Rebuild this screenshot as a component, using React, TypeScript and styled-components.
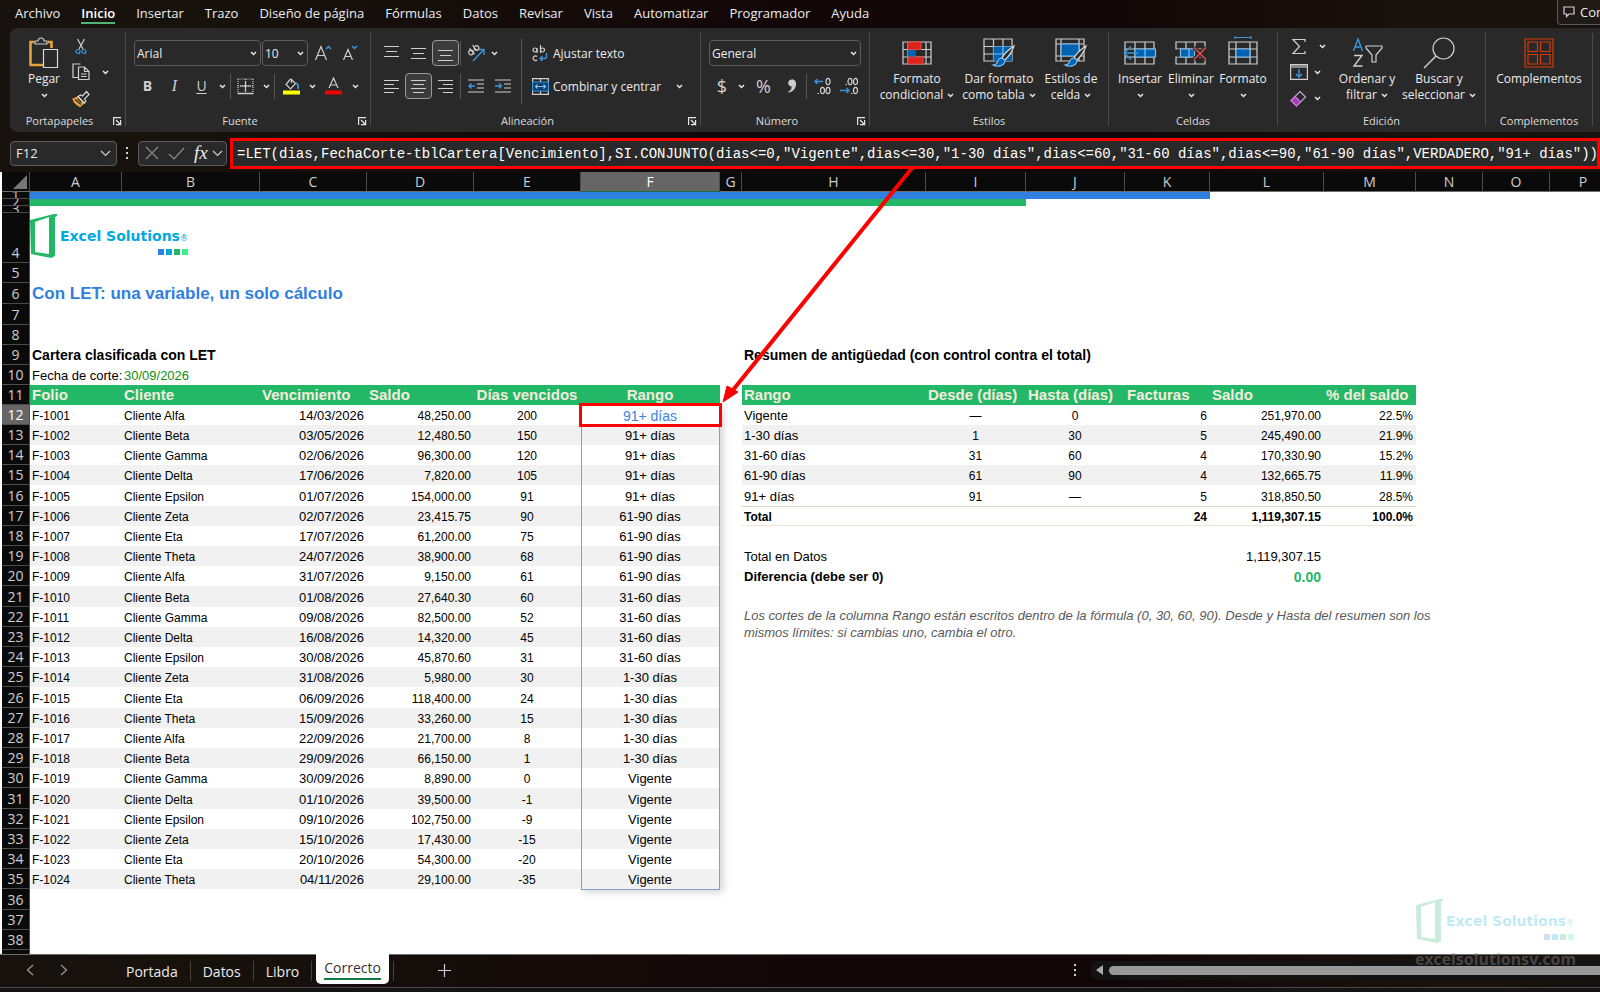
import React from "react";
import styled, { createGlobalStyle, css } from "styled-components";

const UI = `"Open Sans", "Noto Sans", sans-serif`;
const ARIAL = `"Liberation Sans", Arial, sans-serif`;
const INK = "#d0d0d0";
const BLUE = "#3a96dd";
const FILL = "#0063b1";
const LIGHT = "#83beec";

const GlobalStyle = createGlobalStyle`
  *, *::before, *::after { box-sizing: border-box; }
  body { margin: 0; background: #fff; }
  button, input, select { font: inherit; color: inherit; background: none; border: 0; padding: 0; margin: 0; outline: none; }
  svg { display: block; flex: none; }
`;

const Shell = styled.div`
  position: relative;
  display: flex;
  flex-direction: column;
  height: 100vh;
  overflow: hidden;
  font-family: ${UI};
  color: #ececec;
  background: linear-gradient(90deg, #17120d 0%, #17110c 15%, #120606 50%, #120706 70%, #1a120d 90%, #17120d 100%);
`;

/* ---------- Menu tabs ---------- */

const MenuBar = styled.nav`
  display: flex;
  flex: none;
  height: 28px;
  padding-left: 15px;
  gap: 21px;
  font-size: 13px;
  line-height: 26px;
  white-space: nowrap;
  overflow: hidden;
`;

const MenuTab = styled.a<{ $active?: boolean }>`
  height: 24px;
  color: #ececec;
  text-decoration: none;
  ${(p) => p.$active && css`
    font-weight: 600;
    color: #fff;
    border-bottom: 2px solid #4fb477;
  `}
`;

const CommentsButton = styled.button`
  display: flex;
  align-items: center;
  gap: 5px;
  flex: none;
  width: 43px;
  height: 25px;
  margin-left: auto;
  padding-left: 5px;
  overflow: hidden;
  border: 1px solid #5a5a5a;
  border-width: 0 0 1px 1px;
  border-radius: 0 0 0 4px;
  background: #201a17;
`;

/* ---------- Ribbon ---------- */

const Ribbon = styled.div`
  display: flex;
  flex: none;
  height: 104px;
  margin-left: 10px;
  background: #292929;
  border-radius: 8px 0 0 8px;
  overflow: hidden;
`;

const Group = styled.section<{ $w: number }>`
  position: relative;
  display: flex;
  flex-direction: column;
  flex: none;
  width: ${(p) => p.$w}px;
  padding-top: 5px;
`;

const GroupEdge = styled.div`
  flex: none;
  width: 1px;
  height: 93px;
  margin-top: 5px;
  background: #4a4a4a;
`;

const GroupBody = styled.div<{ $left?: number }>`
  display: flex;
  height: 78px;
  padding-left: ${(p) => p.$left ?? 0}px;
`;

const GroupFoot = styled.div`
  display: flex;
  align-items: center;
  height: 20px;
  font-size: 11px;
  line-height: 20px;
  color: #dcdcdc;
`;

const GroupLabel = styled.span`
  flex: 1;
  text-align: center;
`;

const Launcher = styled.button`
  width: 9px;
  height: 9px;
  margin: 0 3px 0 4px;
`;

const ToolRows = styled.div`
  display: flex;
  flex-direction: column;
  gap: 7px;
  padding-top: 7px;
`;

const ToolRow = styled.div`
  display: flex;
  align-items: center;
  height: 26px;
`;

const Tool = styled.button<{ $w?: number; $on?: boolean }>`
  display: flex;
  align-items: center;
  justify-content: center;
  flex: none;
  width: ${(p) => p.$w ?? 27}px;
  height: 26px;
  border-radius: 4px;
  ${(p) => p.$on && css`
    background: #3b3b3b;
    border: 1px solid #9a9a9a;
  `}
`;

const CopyMenu = styled(Tool)`
  margin-top: 26px;
`;

const ToolText = styled.button`
  display: flex;
  align-items: center;
  width: 164px;
  height: 26px;
  font-size: 12px;
  white-space: nowrap;
`;

const ToolIcon = styled.span`
  display: flex;
  justify-content: center;
  width: 26px;
`;

const ToolEnd = styled.span`
  margin-left: auto;
  padding-right: 8px;
`;

const Sep = styled.div<{ $tall?: boolean }>`
  flex: none;
  width: 1px;
  height: ${(p) => (p.$tall ? 65 : 25)}px;
  margin: ${(p) => (p.$tall ? "6px 5px 0 5px" : "0 1px")};
  background: #555;
`;

const Combo = styled.label<{ $w: number }>`
  display: flex;
  align-items: center;
  width: ${(p) => p.$w}px;
  height: 26px;
  margin-right: 1px;
  padding: 0 3px 0 2px;
  border: 1px solid #5c5c5c;
  border-radius: 4px;
  font-size: 12px;

  select { flex: 1; min-width: 0; appearance: none; }
  option { color: #000; }
`;

const BigButton = styled.button<{ $w: number }>`
  display: flex;
  flex-direction: column;
  align-items: center;
  flex: none;
  width: ${(p) => p.$w}px;
  height: 78px;
  font-size: 12px;
  line-height: 16px;
  white-space: nowrap;
`;

const BigIcon = styled.span`
  display: flex;
  align-items: center;
  justify-content: center;
  height: 38px;
  padding-top: 1px;
`;

const BigLine = styled.span`
  display: flex;
  align-items: center;
  gap: 4px;
  height: 16px;
`;

const ToolColumn = styled.div<{ $w: number }>`
  display: flex;
  flex-direction: column;
  flex: none;
  width: ${(p) => p.$w}px;
`;

/* ---------- Formula bar ---------- */

const FormulaBar = styled.div`
  display: flex;
  align-items: center;
  flex: none;
  height: 40px;
  padding-left: 10px;
  padding-top: 2px;
`;

const NameBox = styled.label`
  display: flex;
  align-items: center;
  flex: none;
  width: 107px;
  height: 25px;
  padding: 0 5px;
  border: 1px solid #5c5c5c;
  border-radius: 4px;
  background: #292929;
  font-size: 13px;

  input { flex: 1; min-width: 0; }
`;

const Grip = styled.div`
  display: flex;
  justify-content: center;
  flex: none;
  width: 21px;
`;

const FormulaActions = styled.div`
  display: flex;
  align-items: center;
  flex: none;
  width: 89px;
  height: 25px;
  padding-left: 6px;
  margin-right: 3px;
  gap: 9px;
  border: 1px solid #5c5c5c;
  border-radius: 4px;
  background: #292929;
`;

const FxButton = styled.button`
  display: flex;
  align-items: center;
  gap: 4px;
  font: italic 19px/20px "Liberation Serif", serif;
`;

const FormulaField = styled.label`
  flex: 1;
  min-width: 0;
  height: 31px;
  padding: 0 0 0 4px;
  border: 3px solid #fe0000;
  background: #292929;

  input {
    width: 100%;
    height: 24px;
    font: 14px/24px "Liberation Mono", monospace;
    color: #fff;
  }
`;

/* ---------- Sheet ---------- */

const SheetArea = styled.main`
  flex: 1;
  min-height: 0;
  overflow: hidden;
  padding-left: 2px;
  background: #fff;
  color: #000;
`;

const Grid = styled.table`
  table-layout: fixed;
  width: 100%;
  min-width: 1615px;
  border-collapse: separate;
  border-spacing: 0;
  font-family: ${ARIAL};
  font-size: 12px;
  line-height: 18px;
  white-space: nowrap;
`;

const ColHead = styled.th<{ $on?: boolean }>`
  height: 20px;
  padding: 0;
  font: 14px/18px ${UI};
  color: ${(p) => (p.$on ? "#fff" : "#cfcfcf")};
  background: ${(p) => (p.$on ? "#666" : "#0a0a0a")};
  border-right: 1px solid #4c4c4c;
  border-bottom: 1px solid ${(p) => (p.$on ? "#1e6b3c" : "#6e6e6e")};
`;

const Corner = styled(ColHead)`
  svg { margin-left: auto; margin-right: 2px; }
`;

const RowHead = styled.th<{ $on?: boolean }>`
  padding: 0;
  font: 14px/18px ${UI};
  color: ${(p) => (p.$on ? "#fff" : "#cfcfcf")};
  background: ${(p) => (p.$on ? "#666" : "#0a0a0a")};
  border-right: 1px solid ${(p) => (p.$on ? "#1e6b3c" : "#4c4c4c")};
`;

const RowNumber = styled.div<{ $h: number }>`
  display: flex;
  justify-content: center;
  align-items: ${(p) => (p.$h < 10 ? "center" : "flex-end")};
  height: ${(p) => p.$h}px;
  overflow: hidden;
  border-bottom: 1px solid #4c4c4c;
`;

type Look = "band" | "head" | "sum" | "blue" | "green";

const Cell = styled.td<{ $align?: "left" | "right" | "center"; $look?: Look; $size?: number }>`
  padding: 0 3px 0 2px;
  vertical-align: bottom;
  text-align: ${(p) => p.$align ?? "left"};
  font-weight: 400;
  font-size: ${(p) => p.$size ?? 12}px;
  ${(p) => p.$look === "band" && css`background: #f1f1f1;`}
  ${(p) => p.$look === "blue" && css`background: #2f80e0;`}
  ${(p) => p.$look === "green" && css`background: #23b868;`}
  ${(p) => p.$look === "head" && css`
    vertical-align: middle;
    background: #23b868;
    color: #f4ecdc;
    font-weight: 700;
    font-size: 15px;
  `}
  ${(p) => p.$look === "sum" && css`
    border-top: 1px solid #ddd5bd;
    border-bottom: 1px solid #ece5d8;
    font-weight: 700;
    line-height: 16px;
  `}
`;

const SheetTitle = styled(Cell)`
  vertical-align: middle;
  font-size: 17px;
  font-weight: 700;
  color: #2f80e0;
`;

const Subtitle = styled(Cell)`
  vertical-align: middle;
  font-size: 14px;
  font-weight: 700;
`;

const DateCell = styled(Cell)`
  color: #118c11;
`;

const LogoCell = styled(Cell)`
  vertical-align: top;
`;

const CheckLabel = styled(Cell)`
  font-size: 13px;
  font-weight: 700;
`;

const ZeroCell = styled(Cell)`
  font-size: 14px;
  font-weight: 700;
  color: #23b868;
`;

const NoteCell = styled(Cell)`
  vertical-align: top;
  font-size: 13px;
  font-style: italic;
  line-height: 17px;
  color: #595959;
`;

const ActiveCell = styled(Cell)`
  position: relative;
  font-size: 14px;
  color: #3a84de;
`;

const SpillOutline = styled.div`
  position: absolute;
  top: 0;
  left: 0;
  right: 0;
  height: 485px;
  border: 1px solid #7f9fd4;
  box-shadow: 3px 2px 8px rgba(0, 0, 0, 0.18);
  clip-path: inset(0 -12px -12px 0);
  pointer-events: none;
`;

const Highlight = styled.div`
  position: absolute;
  inset: -2px;
  border: 3px solid #fe0000;
`;

/* ---------- Brand ---------- */

const Brand = styled.div`
  display: flex;
  align-items: center;
  height: 46px;
  margin-left: -2px;
  gap: 3px;
`;

const BrandWords = styled.div`
  padding-top: 10px;
`;

const BrandName = styled.div`
  font: 700 14px/17px "DejaVu Sans", sans-serif;
  color: #00a9e0;

  small { font-size: 8px; font-weight: 400; }
`;

const BrandSquares = styled.div`
  display: flex;
  justify-content: flex-end;
  gap: 2px;
  padding-top: 2px;
`;

const BrandSquare = styled.i<{ $c: string }>`
  width: 6px;
  height: 6px;
  background: ${(p) => p.$c};
`;

const Watermark = styled.aside`
  position: absolute;
  right: 24px;
  bottom: 23px;
  width: 162px;
  font: 700 16px/20px "Noto Sans", sans-serif;
  color: #777;
`;

const WatermarkLogo = styled.div`
  padding: 0 0 5px 4px;
  opacity: 0.24;
`;

const WatermarkUrl = styled.div`
  opacity: 0.5;
  text-align: right;
`;

const ArrowLayer = styled.svg`
  position: absolute;
  top: 0;
  left: 0;
  pointer-events: none;
`;

/* ---------- Sheet tabs and status ---------- */

const BottomBar = styled.footer`
  display: flex;
  flex: none;
  height: 34px;
  padding-left: 2px;
  border-top: 1px solid #6e6e6e;
  border-bottom: 1px solid #4a4a4a;
`;

const StatusBar = styled.div`
  flex: none;
  height: 4px;
  background: #131313;
`;

const Arrows = styled.div`
  display: flex;
  align-items: center;
  width: 112px;
  height: 30px;
  padding-left: 24px;
  gap: 26px;
`;

const SheetTab = styled.button<{ $active?: boolean }>`
  display: flex;
  align-items: center;
  height: 32px;
  padding: 0 12px;
  font-size: 14px;

  ${(p) => p.$active && css`
    height: 30px;
    margin: -1px 4px 0 4px;
    padding: 0 8px 2px;
    color: #333;
    background: #fff;
    border-radius: 0 0 5px 5px;

    span { border-bottom: 2px solid #107c41; line-height: 21px; }
  `}
`;

const TabEdge = styled.div`
  width: 1px;
  height: 20px;
  margin-top: 6px;
  background: #4a4038;
`;

const AddSheet = styled.button`
  display: flex;
  align-items: center;
  justify-content: center;
  width: 102px;
  height: 30px;
`;

const ScrollZone = styled.div`
  display: flex;
  align-items: center;
  width: 526px;
  height: 30px;
  margin-left: auto;
`;

const ScrollTrack = styled.div`
  display: flex;
  align-items: center;
  flex: 1;
  height: 19px;
  margin-left: 14px;
  padding-left: 5px;
  gap: 6px;
  border-radius: 8px 0 0 8px;
  background: #131313;
`;

const ScrollThumb = styled.div`
  flex: 1;
  height: 9px;
  border-radius: 5px 0 0 5px;
  background: #999;
`;

/* ---------- Icons ---------- */

type SvgProps = { w: number; h: number; children: React.ReactNode; stroke?: string };

const Svg = ({ w, h, children, stroke = INK }: SvgProps) => (
  <svg width={w} height={h} viewBox={`0 0 ${w} ${h}`} fill="none" stroke={stroke} strokeWidth="1.2" aria-hidden="true">
    {children}
  </svg>
);

const Chevron = ({ big }: { big?: boolean }) =>
  big ? (
    <Svg w={11} h={7}><path d="M1 1l4.500 4.500L10 1" /></Svg>
  ) : (
    <Svg w={7} h={5} stroke="#e6e6e6"><path d="M1 1l2.500 2.500L6 1" strokeWidth="1.500" /></Svg>
  );

const LauncherIcon = () => (
  <Svg w={9} h={9} stroke="#e6e6e6"><path d="M.6 8V.6H8M3 3l4 4M7.600 3v4.600H3" /></Svg>
);

const PasteIcon = () => (
  <Svg w={30} h={32}>
    <path d="M5 5H1.500V28H14M19 5h3.500v6" stroke="#e8a33d" strokeWidth="2.600" />
    <path d="M6 7V4h3a3 3 0 016 0h3v3z" fill="#292929" />
    <path d="M14.500 12.500h14v18h-14z" fill="#292929" stroke="#d8d8d8" />
  </Svg>
);

const ScissorsIcon = () => (
  <Svg w={12} h={17}>
    <path d="M2.500 1L8 11M9.500 1L4 11" />
    <circle cx="3" cy="13.500" r="2" stroke={BLUE} />
    <circle cx="9" cy="13.500" r="2" stroke={BLUE} />
  </Svg>
);

const CopyIcon = () => (
  <Svg w={18} h={18}>
    <path d="M6 14.500H1V1h7.500M6.500 4h6l4.500 4.500V16.500H6.500z M12.500 4v4.500H17M9 11h5.500M9 13.500h5.500" />
  </Svg>
);

const BrushIcon = () => (
  <Svg w={18} h={17}>
    <path d="M1 9l6-2.500 5.500 6L8 16.500C5 15 2 12 1 9z" fill="#e8a33d" stroke="#e8a33d" />
    <path d="M3 9.500l6 5M5.500 8.500l4 4" stroke="#292929" />
    <path d="M6 6.500l6.500 6.500 1.500-2-1.500-2L17 4.500 14.500 1.500 10.500 6 8.500 5z" stroke="#d8d8d8" fill="#292929" />
  </Svg>
);

const FontSizeIcon = ({ up }: { up?: boolean }) => (
  <Svg w={18} h={18}>
    {up ? <path d="M1.500 16L7 2.500 12.500 16M3.500 11.500h7" /> : <path d="M1.500 16L6 5.500 10.500 16M3 12.500h6" />}
    {up ? <path d="M12 5l2.500-2.500L17 5" stroke={BLUE} strokeWidth="1.500" /> : <path d="M10 2l2.500 2.500L15 2" stroke={BLUE} strokeWidth="1.500" />}
  </Svg>
);

const BordersIcon = () => (
  <Svg w={17} h={17}>
    <path d="M.500 1h16M1 1v14M8.500 1v14M16 1v14M1 8h15" strokeDasharray="1 1" />
    <path d="M3 8h11M8.500 3v10" />
    <path d="M.500 15.500h16" strokeWidth="1.600" />
  </Svg>
);

const FillIcon = () => (
  <Svg w={17} h={18}>
    <path d="M7.500 2L3 7.500 7.500 12l5-5.500-4-4V6" />
    <path d="M13 6c2 1 2.500 3 2 6" stroke={BLUE} strokeWidth="1.800" />
    <path d="M0 15.500h17" stroke="#ffff00" strokeWidth="4" />
  </Svg>
);

const FontColorIcon = () => (
  <Svg w={17} h={18}>
    <path d="M4 11L8.500 1 13 11M5.500 8h6" />
    <path d="M0 15.500h17" stroke="#f00000" strokeWidth="4" />
  </Svg>
);

const LinesIcon = ({ rows, dy = 0 }: { rows: [number, number][]; dy?: number }) => (
  <Svg w={16} h={17}>
    {rows.map(([a, b], i) => (
      <path key={i} d={`M${a} ${2.5 + dy + i * (rows.length === 3 ? 5 : 4)}H${b}`} />
    ))}
  </Svg>
);

const OrientIcon = () => (
  <Svg w={18} h={18}>
    <path d="M6 17L16.500 6M11.500 5.500h5.500V11" stroke={BLUE} strokeWidth="1.400" />
    <circle cx="4" cy="8.500" r="2.300" /><path d="M2.500 4.500L7.500 10" />
    <path d="M5.500 1L10 7" /><circle cx="9.500" cy="4" r="2.300" />
  </Svg>
);

const IndentIcon = ({ inward }: { inward?: boolean }) => (
  <Svg w={16} h={17}>
    <path d="M0 2h16M9 6h7M9 10h7M0 14h16" />
    <path d={inward ? "M0 8h6M4 5.500L6.500 8 4 10.500" : "M7 8H1M3.500 5.500L1 8l2.500 2.500"} stroke={BLUE} strokeWidth="1.500" />
  </Svg>
);

const WrapIcon = () => (
  <Svg w={16} h={17}>
    <circle cx="3" cy="5" r="2" /><path d="M5 3v5M8.500 0v8" /><circle cx="10.500" cy="5" r="2" />
    <path d="M5 11.500a2.300 2.300 0 100 3.500" />
    <path d="M14.500 8v3.500a2 2 0 01-2 2H8M10.500 11L8 13.500l2.500 2.500" stroke={BLUE} strokeWidth="1.400" />
  </Svg>
);

const MergeIcon = () => (
  <Svg w={17} h={17}>
    <path d="M.600.600h15.800v15.800H.600zM8.500 1v3M8.500 13v3" />
    <path d="M.600 4h15.800v9H.600z" fill="#0b3f6b" stroke={BLUE} />
    <path d="M3.500 8.500h10M5.500 6.500l-2 2 2 2M11.500 6.500l2 2-2 2" stroke={LIGHT} />
  </Svg>
);

const Glyph = styled.span<{ $size?: number; $weight?: number; $serif?: boolean }>`
  font: ${(p) => p.$weight ?? 400} ${(p) => p.$size ?? 14}px/20px ${(p) => (p.$serif ? `"Liberation Serif", serif` : UI)};
  color: ${INK};
`;
const ItalicGlyph = styled(Glyph)`font-style: italic;`;
const UnderGlyph = styled(Glyph)`text-decoration: underline; text-underline-offset: 2px;`;

const CommaIcon = () => (
  <Svg w={10} h={14}>
    <path d="M5 1a3 3 0 110 6.500C5 10 4 11.500 1.500 13 7 12.500 9 8 8.500 4A3.500 3.500 0 005 1z" fill={INK} strokeWidth="0.800" />
    <circle cx="4.800" cy="4" r="3" fill={INK} />
  </Svg>
);

const DecimalIcon = ({ less }: { less?: boolean }) => (
  <Svg w={18} h={18}>
    {less ? (
      <>
        <ellipse cx="10" cy="4.500" rx="2" ry="3.200" /><ellipse cx="15.500" cy="4.500" rx="2" ry="3.200" /><path d="M5.500 7.500H7" />
        <ellipse cx="15.500" cy="13.500" rx="2" ry="3.200" /><path d="M11 16.500h1.500" />
        <path d="M0 13.500h9M6.500 11L9 13.500 6.500 16" stroke={BLUE} strokeWidth="1.400" />
      </>
    ) : (
      <>
        <ellipse cx="15" cy="4.500" rx="2" ry="3.200" />
        <ellipse cx="9.500" cy="13.500" rx="2" ry="3.200" /><ellipse cx="15" cy="13.500" rx="2" ry="3.200" /><path d="M4.500 16.500H6" />
        <path d="M10 4.500H1.500M4.500 2L2 4.500 4.500 7" stroke={BLUE} strokeWidth="1.400" />
      </>
    )}
  </Svg>
);

const CondIcon = () => (
  <Svg w={30} h={24}>
    <path d="M1 1h28v22H1zM6 1v22M24 1v22M1 8.500h28M1 16h28" />
    <path d="M6 1h13v7.500H6zM6 16h15v7H6z" fill="#d9251c" stroke="#e8453c" />
    <path d="M6 9h8v6.500H6z" fill={FILL} stroke="none" />
  </Svg>
);

const BrushOver = () => (
  <>
    <path d="M31 8c-6 4-10 8-12 12l3 2c4-4 7-8 9-14z" fill="#292929" stroke="#d8d8d8" />
    <path d="M19 20c-4 0-4 3-5 5-1 2-3 2-4 2 3 2 12 2 12-5z" fill={FILL} stroke={LIGHT} />
  </>
);

const TableFmtIcon = () => (
  <Svg w={33} h={29}>
    <path d="M1 1h28v22H1zM10.500 1v22M20 1v22M1 8.500h28M1 16h28" />
    <path d="M10.500 8.500H29V23H10.500z" fill={FILL} stroke="none" />
    <path d="M20 8.500V23M10.500 16H29" stroke={LIGHT} />
    <BrushOver />
  </Svg>
);

const CellStyleIcon = () => (
  <Svg w={33} h={29}>
    <path d="M1 1h28v22H1zM6 1v22M24 1v22M1 6h28M1 18h28" />
    <path d="M6 6h18v12H6z" fill={FILL} stroke={LIGHT} />
    <BrushOver />
  </Svg>
);

const InsertCellIcon = () => (
  <Svg w={34} h={24}>
    <path d="M2 1h29v22H2zM12 1v22M22 1v22M2 8h29M2 16h29" />
    <path d="M12 8h20.500v8H12z" fill={FILL} stroke={LIGHT} />
    <path d="M22 8v8" stroke={LIGHT} />
    <path d="M15 12H1M8 5.500L1 12l7 6.500" stroke={BLUE} strokeWidth="1.500" />
  </Svg>
);

const DeleteCellIcon = () => (
  <Svg w={32} h={24}>
    <path d="M1 1h29v22H1zM11 1v22M20 1v22M1 8h29M1 16h29" />
    <path d="M0 8.600h32v6.800H0z" fill="#292929" stroke="none" />
    <path d="M5.500 8h14v8h-14z" fill={FILL} stroke={LIGHT} /><path d="M14 8v8" stroke={LIGHT} />
    <path d="M19 6.500l12 12M31 6.500l-12 12" stroke="#292929" strokeWidth="4" />
    <path d="M19 6.500l12 12M31 6.500l-12 12" stroke="#e84b4b" strokeWidth="1.500" />
  </Svg>
);

const FormatCellIcon = () => (
  <Svg w={30} h={33}>
    <path d="M7 1.500h16M7 0v3M23 0v3" stroke={BLUE} />
    <path d="M1 6h28v22H1zM8 6v22M22 6v22M1 13h28M1 21h28" />
    <path d="M8 13h14v8H8z" fill={FILL} stroke={LIGHT} />
  </Svg>
);

const SigmaIcon = () => (<Svg w={16} h={17}><path d="M14 4V1.500H2L8.500 8.500 2 15.500H14V13" /></Svg>);
const FillDownIcon = () => (
  <Svg w={18} h={16}>
    <path d="M.600.600h16.800v14.800H.600z" /><path d="M1 2.500h16" strokeWidth="3" stroke="#8a8a8a" />
    <path d="M9 5v8M6 10l3 3 3-3" stroke={BLUE} strokeWidth="1.500" />
  </Svg>
);
const EraserIcon = () => (
  <Svg w={17} h={17}>
    <path d="M10 1.500l5.500 5.500-9 9L1 10.500z" stroke="#c9a0dc" />
    <path d="M5 6.500l5.500 5.500-4 4L1 10.500z" fill="#a33db5" stroke="#c879d6" />
  </Svg>
);

const SortIcon = () => (
  <Svg w={31} h={30}>
    <path d="M1.500 13L6 1l4.500 12M3 9h6" stroke={BLUE} strokeWidth="1.400" />
    <path d="M2 17.500h8L2 28h8.500" strokeWidth="1.400" />
    <path d="M14 8h16v2l-6 7v7h-4v-7l-6-7z" />
  </Svg>
);

const FindIcon = () => (
  <Svg w={32} h={32}><circle cx="20.500" cy="11.500" r="10.500" /><path d="M13 19L1 31" strokeWidth="1.500" /></Svg>
);

const AddinsIcon = () => (
  <Svg w={30} h={30} stroke="#d83b01">
    <path d="M1 1h28v28H1zM4 4h9.500v9.500H4zM16.500 4H26v9.500h-9.500zM4 16.500h9.500V26H4zM16.500 16.500H26V26h-9.500z" />
  </Svg>
);

const DotsIcon = () => (
  <svg width="3" height="12" fill="#d0d0d0" aria-hidden="true"><path d="M0 0h2v2H0zM0 5h2v2H0zM0 10h2v2H0z" /></svg>
);

const DoorIcon = () => (
  <svg width="27" height="44" viewBox="0 0 27 44" aria-hidden="true">
    <path fillRule="evenodd" fill="#23b868" d="M0 6L24 0h3v2l-2 1v39l-4 2L1 40zM5 8l14-5v37L5 38z" />
  </svg>
);

const Logo = () => (
  <Brand>
    <DoorIcon />
    <BrandWords>
      <BrandName>Excel Solutions<small>®</small></BrandName>
      <BrandSquares>
        {["#2f80e0", "#00a9e0", "#23b868", "#3df08c"].map((c) => <BrandSquare key={c} $c={c} />)}
      </BrandSquares>
    </BrandWords>
  </Brand>
);

/* ---------- Data ---------- */

const COLUMNS: [string, number | undefined][] = [
  ["A", 92], ["B", 138], ["C", 107], ["D", 107], ["E", 107], ["F", 139], ["G", 22], ["H", 184],
  ["I", 100], ["J", 99], ["K", 85], ["L", 114], ["M", 92], ["N", 67], ["O", 67], ["P", undefined],
];

const INVOICES = [
  ["F-1001", "Cliente Alfa", "14/03/2026", "48,250.00", "200", "91+ días"],
  ["F-1002", "Cliente Beta", "03/05/2026", "12,480.50", "150", "91+ días"],
  ["F-1003", "Cliente Gamma", "02/06/2026", "96,300.00", "120", "91+ días"],
  ["F-1004", "Cliente Delta", "17/06/2026", "7,820.00", "105", "91+ días"],
  ["F-1005", "Cliente Epsilon", "01/07/2026", "154,000.00", "91", "91+ días"],
  ["F-1006", "Cliente Zeta", "02/07/2026", "23,415.75", "90", "61-90 días"],
  ["F-1007", "Cliente Eta", "17/07/2026", "61,200.00", "75", "61-90 días"],
  ["F-1008", "Cliente Theta", "24/07/2026", "38,900.00", "68", "61-90 días"],
  ["F-1009", "Cliente Alfa", "31/07/2026", "9,150.00", "61", "61-90 días"],
  ["F-1010", "Cliente Beta", "01/08/2026", "27,640.30", "60", "31-60 días"],
  ["F-1011", "Cliente Gamma", "09/08/2026", "82,500.00", "52", "31-60 días"],
  ["F-1012", "Cliente Delta", "16/08/2026", "14,320.00", "45", "31-60 días"],
  ["F-1013", "Cliente Epsilon", "30/08/2026", "45,870.60", "31", "31-60 días"],
  ["F-1014", "Cliente Zeta", "31/08/2026", "5,980.00", "30", "1-30 días"],
  ["F-1015", "Cliente Eta", "06/09/2026", "118,400.00", "24", "1-30 días"],
  ["F-1016", "Cliente Theta", "15/09/2026", "33,260.00", "15", "1-30 días"],
  ["F-1017", "Cliente Alfa", "22/09/2026", "21,700.00", "8", "1-30 días"],
  ["F-1018", "Cliente Beta", "29/09/2026", "66,150.00", "1", "1-30 días"],
  ["F-1019", "Cliente Gamma", "30/09/2026", "8,890.00", "0", "Vigente"],
  ["F-1020", "Cliente Delta", "01/10/2026", "39,500.00", "-1", "Vigente"],
  ["F-1021", "Cliente Epsilon", "09/10/2026", "102,750.00", "-9", "Vigente"],
  ["F-1022", "Cliente Zeta", "15/10/2026", "17,430.00", "-15", "Vigente"],
  ["F-1023", "Cliente Eta", "20/10/2026", "54,300.00", "-20", "Vigente"],
  ["F-1024", "Cliente Theta", "04/11/2026", "29,100.00", "-35", "Vigente"],
];
const INVOICE_ALIGN = ["left", "left", "right", "right", "center", "center"] as const;
const INVOICE_SIZE = [12, 12, 13, 12, 12, 13];

const SUMMARY = [
  ["Vigente", "—", "0", "6", "251,970.00", "22.5%"],
  ["1-30 días", "1", "30", "5", "245,490.00", "21.9%"],
  ["31-60 días", "31", "60", "4", "170,330.90", "15.2%"],
  ["61-90 días", "61", "90", "4", "132,665.75", "11.9%"],
  ["91+ días", "91", "—", "5", "318,850.50", "28.5%"],
  ["Total", "", "", "24", "1,119,307.15", "100.0%"],
];
const SUMMARY_ALIGN = ["left", "center", "center", "right", "right", "right"] as const;
const SUMMARY_SIZE = [13, 12, 12, 12, 12, 12];

const FORMULA =
  '=LET(dias,FechaCorte-tblCartera[Vencimiento],SI.CONJUNTO(dias<=0,"Vigente",dias<=30,"1-30 días",dias<=60,"31-60 días",dias<=90,"61-90 días",VERDADERO,"91+ días"))';

const rowHeight = (n: number) => {
  if (n <= 3) return 7;
  if (n === 4) return 50;
  if (n === 6 || n === 7) return 21;
  return n > 12 && (n - 11) % 5 === 0 ? 21 : 20;
};

const Blank = ({ span }: { span: number }) => <Cell colSpan={span} />;

const InvoiceCells = ({ n }: { n: number }) => (
  <>
    {INVOICES[n - 12].map((text, i) =>
      n === 12 && i === 5 ? (
        <ActiveCell key={i} $align="center">
          {text}
          <SpillOutline />
          <Highlight />
        </ActiveCell>
      ) : (
        <Cell key={i} $align={INVOICE_ALIGN[i]} $size={INVOICE_SIZE[i]} $look={n % 2 ? "band" : undefined}>{text}</Cell>
      )
    )}
  </>
);

const SummaryCells = ({ n }: { n: number }) => {
  if (n <= 17)
    return (
      <>
        {SUMMARY[n - 12].map((text, i) => (
          <Cell
            key={i}
            $align={SUMMARY_ALIGN[i]}
            $size={n === 17 ? 12 : SUMMARY_SIZE[i]}
            $look={n === 17 ? "sum" : n % 2 ? "band" : undefined}
          >
            {text}
          </Cell>
        ))}
        <Blank span={3} />
      </>
    );
  if (n === 19)
    return (<><Cell $size={13}>Total en Datos</Cell><Blank span={3} /><Cell $align="right" $size={13}>1,119,307.15</Cell><Blank span={4} /></>);
  if (n === 20)
    return (<><CheckLabel>Diferencia (debe ser 0)</CheckLabel><Blank span={3} /><ZeroCell $align="right">0.00</ZeroCell><Blank span={4} /></>);
  if (n === 22)
    return (
      <>
        <NoteCell colSpan={6} rowSpan={2}>
          Los cortes de la columna Rango están escritos dentro de la fórmula (0, 30, 60, 90). Desde y Hasta del resumen son los
          <br />
          mismos límites: si cambias uno, cambia el otro.
        </NoteCell>
        <Blank span={3} />
      </>
    );
  if (n === 23) return <Blank span={3} />;
  return <Blank span={9} />;
};

const RowCells = ({ n }: { n: number }) => {
  switch (n) {
    case 1: return <><Cell colSpan={11} $look="blue" /><Blank span={5} /></>;
    case 2: return <><Cell colSpan={9} $look="green" /><Blank span={7} /></>;
    case 4: return <><LogoCell colSpan={2}><Logo /></LogoCell><Blank span={14} /></>;
    case 6: return <><SheetTitle colSpan={5}>Con LET: una variable, un solo cálculo</SheetTitle><Blank span={11} /></>;
    case 9:
      return (
        <>
          <Subtitle colSpan={3}>Cartera clasificada con LET</Subtitle><Blank span={4} />
          <Subtitle colSpan={5}>Resumen de antigüedad (con control contra el total)</Subtitle><Blank span={4} />
        </>
      );
    case 10: return <><Cell $size={13}>Fecha de corte:</Cell><DateCell $size={13}>30/09/2026</DateCell><Blank span={14} /></>;
    case 11:
      return (
        <>
          {["Folio", "Cliente", "Vencimiento", "Saldo", "Días vencidos", "Rango"].map((t, i) => (
            <Cell as="th" scope="col" key={t} $look="head" $align={i > 3 ? "center" : "left"}>{t}</Cell>
          ))}
          <Blank span={1} />
          {["Rango", "Desde (días)", "Hasta (días)", "Facturas", "Saldo", "% del saldo"].map((t) => (
            <Cell as="th" scope="col" key={t} $look="head">{t}</Cell>
          ))}
          <Blank span={3} />
        </>
      );
  }
  if (n < 12 || n > 35) return <Blank span={16} />;
  return <><InvoiceCells n={n} /><Blank span={1} /><SummaryCells n={n} /></>;
};

/* ---------- Page ---------- */

const Foot = ({ label, launch }: { label: string; launch?: boolean }) => (
  <GroupFoot>
    <GroupLabel>{label}</GroupLabel>
    {launch && <Launcher aria-label={`Opciones de ${label}`}><LauncherIcon /></Launcher>}
  </GroupFoot>
);

const Big = ({ w, icon, lines, below }: { w: number; icon: React.ReactNode; lines: string[]; below?: boolean }) => (
  <BigButton $w={w}>
    <BigIcon>{icon}</BigIcon>
    {lines.map((t, i) => (
      <BigLine key={t}>{t}{!below && lines.length > 1 && i === lines.length - 1 && <Chevron />}</BigLine>
    ))}
    {below && <BigLine><Chevron /></BigLine>}
  </BigButton>
);

const Pick = ({ w, name, value }: { w: number; name: string; value: string }) => (
  <Combo $w={w}>
    <select aria-label={name} defaultValue={value}><option>{value}</option></select>
    <Chevron />
  </Combo>
);

const Drop = ({ w = 14, name }: { w?: number; name: string }) => <Tool $w={w} aria-label={name}><Chevron /></Tool>;

const TABS = ["Archivo", "Inicio", "Insertar", "Trazo", "Diseño de página", "Fórmulas", "Datos", "Revisar", "Vista", "Automatizar", "Programador", "Ayuda"];

export default function App() {
  return (
    <Shell>
      <GlobalStyle />
      <MenuBar>
        {TABS.map((t) => <MenuTab key={t} href="#" $active={t === "Inicio"}>{t}</MenuTab>)}
        <CommentsButton>
          <Svg w={12} h={12}><path d="M1 1h10v7H6L3.500 10.500V8H1z" /></Svg>
          Comentarios
        </CommentsButton>
      </MenuBar>

      <Ribbon>
        <Group $w={115}>
          <GroupBody $left={11}>
            <Big w={46} icon={<PasteIcon />} lines={["Pegar"]} below />
            <ToolColumn $w={28}>
              <Tool $w={28} aria-label="Cortar"><ScissorsIcon /></Tool>
              <Tool $w={28} aria-label="Copiar"><CopyIcon /></Tool>
              <Tool $w={28} aria-label="Copiar formato"><BrushIcon /></Tool>
            </ToolColumn>
            <CopyMenu $w={20} aria-label="Opciones de copiar"><Chevron /></CopyMenu>
          </GroupBody>
          <Foot label="Portapapeles" launch />
        </Group>
        <GroupEdge />
        <Group $w={244}>
          <GroupBody $left={8}>
            <ToolRows>
              <ToolRow>
                <Pick w={127} name="Fuente" value="Arial" />
                <Pick w={46} name="Tamaño" value="10" />
                <Tool $w={28} aria-label="Aumentar fuente"><FontSizeIcon up /></Tool>
                <Tool aria-label="Reducir fuente"><FontSizeIcon /></Tool>
              </ToolRow>
              <ToolRow>
                <Tool aria-label="Negrita"><Glyph $weight={700}>B</Glyph></Tool>
                <Tool aria-label="Cursiva"><ItalicGlyph $serif $size={16}>I</ItalicGlyph></Tool>
                <Tool aria-label="Subrayado"><UnderGlyph>U</UnderGlyph></Tool>
                <Drop name="Estilos de subrayado" />
                <Sep />
                <Tool aria-label="Bordes"><BordersIcon /></Tool>
                <Drop name="Tipos de borde" />
                <Sep />
                <Tool $w={30} aria-label="Color de relleno"><FillIcon /></Tool>
                <Drop w={12} name="Colores de relleno" />
                <Tool $w={31} aria-label="Color de fuente"><FontColorIcon /></Tool>
                <Drop w={12} name="Colores de fuente" />
              </ToolRow>
            </ToolRows>
          </GroupBody>
          <Foot label="Fuente" launch />
        </Group>
        <GroupEdge />
        <Group $w={329}>
          <GroupBody $left={7}>
            <ToolRows>
              <ToolRow>
                <Tool aria-label="Alinear arriba"><LinesIcon rows={[[0, 15], [2, 13], [0, 15]]} dy={-1} /></Tool>
                <Tool aria-label="Alinear al medio"><LinesIcon rows={[[0, 15], [2, 13], [0, 15]]} dy={1} /></Tool>
                <Tool $on aria-label="Alinear abajo"><LinesIcon rows={[[0, 15], [2, 13], [0, 15]]} dy={3} /></Tool>
                <Sep />
                <Tool aria-label="Orientación"><OrientIcon /></Tool>
                <Drop w={10} name="Opciones de orientación" />
              </ToolRow>
              <ToolRow>
                <Tool aria-label="Izquierda"><LinesIcon rows={[[0, 15], [0, 10], [0, 15], [0, 10]]} /></Tool>
                <Tool $on aria-label="Centrar"><LinesIcon rows={[[0, 15], [2, 13], [0, 15], [2, 13]]} /></Tool>
                <Tool aria-label="Derecha"><LinesIcon rows={[[0, 15], [5, 15], [0, 15], [5, 15]]} /></Tool>
                <Sep />
                <Tool aria-label="Disminuir sangría"><IndentIcon /></Tool>
                <Tool aria-label="Aumentar sangría"><IndentIcon inward /></Tool>
              </ToolRow>
            </ToolRows>
            <Sep $tall />
            <ToolRows>
              <ToolText><ToolIcon><WrapIcon /></ToolIcon>Ajustar texto</ToolText>
              <ToolText><ToolIcon><MergeIcon /></ToolIcon>Combinar y centrar<ToolEnd><Chevron /></ToolEnd></ToolText>
            </ToolRows>
          </GroupBody>
          <Foot label="Alineación" launch />
        </Group>
        <GroupEdge />
        <Group $w={168}>
          <GroupBody $left={8}>
            <ToolRows>
              <ToolRow><Pick w={152} name="Formato de número" value="General" /></ToolRow>
              <ToolRow>
                <Tool $w={26} aria-label="Moneda"><Glyph $size={18}>$</Glyph></Tool>
                <Drop w={13} name="Formatos de moneda" />
                <Tool $w={31} aria-label="Porcentaje"><Glyph $size={18}>%</Glyph></Tool>
                <Tool $w={26} aria-label="Millares"><CommaIcon /></Tool>
                <Sep />
                <Tool aria-label="Más decimales"><DecimalIcon /></Tool>
                <Tool aria-label="Menos decimales"><DecimalIcon less /></Tool>
              </ToolRow>
            </ToolRows>
          </GroupBody>
          <Foot label="Número" launch />
        </Group>
        <GroupEdge />
        <Group $w={238}>
          <GroupBody $left={6}>
            <Big w={82} icon={<CondIcon />} lines={["Formato", "condicional"]} />
            <Big w={82} icon={<TableFmtIcon />} lines={["Dar formato", "como tabla"]} />
            <Big w={62} icon={<CellStyleIcon />} lines={["Estilos de", "celda"]} />
          </GroupBody>
          <Foot label="Estilos" />
        </Group>
        <GroupEdge />
        <Group $w={168}>
          <GroupBody $left={5}>
            <Big w={52} icon={<InsertCellIcon />} lines={["Insertar"]} below />
            <Big w={50} icon={<DeleteCellIcon />} lines={["Eliminar"]} below />
            <Big w={54} icon={<FormatCellIcon />} lines={["Formato"]} below />
          </GroupBody>
          <Foot label="Celdas" />
        </Group>
        <GroupEdge />
        <Group $w={207}>
          <GroupBody $left={7}>
            <ToolColumn $w={47}>
              <ToolRow><Tool aria-label="Autosuma"><SigmaIcon /></Tool><Drop w={20} name="Funciones" /></ToolRow>
              <ToolRow><Tool aria-label="Rellenar"><FillDownIcon /></Tool><Drop w={10} name="Opciones de relleno" /></ToolRow>
              <ToolRow><Tool aria-label="Borrar"><EraserIcon /></Tool><Drop w={10} name="Opciones de borrado" /></ToolRow>
            </ToolColumn>
            <Big w={70} icon={<SortIcon />} lines={["Ordenar y", "filtrar"]} />
            <Big w={74} icon={<FindIcon />} lines={["Buscar y", "seleccionar"]} />
          </GroupBody>
          <Foot label="Edición" />
        </Group>
        <GroupEdge />
        <Group $w={106}>
          <GroupBody>
            <Big w={106} icon={<AddinsIcon />} lines={["Complementos"]} />
          </GroupBody>
          <Foot label="Complementos" />
        </Group>
        <GroupEdge />
      </Ribbon>

      <FormulaBar>
        <NameBox><input aria-label="Cuadro de nombres" defaultValue="F12" /><Chevron big /></NameBox>
        <Grip><DotsIcon /></Grip>
        <FormulaActions>
          <button aria-label="Cancelar"><Svg w={14} h={14} stroke="#8a8a8a"><path d="M1 1l12 12M13 1L1 13" /></Svg></button>
          <button aria-label="Introducir"><Svg w={17} h={13} stroke="#8a8a8a"><path d="M1 7l5 5L16 1" /></Svg></button>
          <FxButton aria-label="Insertar función">fx<Chevron big /></FxButton>
        </FormulaActions>
        <FormulaField><input aria-label="Barra de fórmulas" defaultValue={FORMULA} spellCheck={false} /></FormulaField>
      </FormulaBar>

      <SheetArea>
        <Grid>
          <colgroup>
            <col width={28} />
            {COLUMNS.map(([c, w]) => <col key={c} width={w} />)}
          </colgroup>
          <thead>
            <tr>
              <Corner aria-label="Seleccionar todo"><svg width="14" height="14"><path d="M14 0v14H0z" fill="#777" /></svg></Corner>
              {COLUMNS.map(([c]) => <ColHead key={c} scope="col" $on={c === "F"}>{c}</ColHead>)}
            </tr>
          </thead>
          <tbody>
            {Array.from({ length: 39 }, (_, i) => i + 1).map((n) => (
              <tr key={n}>
                <RowHead scope="row" $on={n === 12}><RowNumber $h={rowHeight(n)}>{n}</RowNumber></RowHead>
                <RowCells n={n} />
              </tr>
            ))}
          </tbody>
        </Grid>
      </SheetArea>

      <BottomBar>
        <Arrows>
          <button aria-label="Hoja anterior"><Svg w={8} h={12} stroke="#9a9a9a"><path d="M7 1L1.500 6 7 11" /></Svg></button>
          <button aria-label="Hoja siguiente"><Svg w={8} h={12} stroke="#9a9a9a"><path d="M1 1l5.500 5L1 11" /></Svg></button>
        </Arrows>
        <SheetTab>Portada</SheetTab>
        <TabEdge />
        <SheetTab>Datos</SheetTab>
        <TabEdge />
        <SheetTab>Libro</SheetTab>
        <TabEdge />
        <SheetTab $active><span>Correcto</span></SheetTab>
        <TabEdge />
        <AddSheet aria-label="Hoja nueva"><Svg w={13} h={13}><path d="M6.500 0v13M0 6.500h13" /></Svg></AddSheet>
        <ScrollZone>
          <DotsIcon />
          <ScrollTrack>
            <svg width="7" height="10" aria-hidden="true"><path d="M7 0v10L0 5z" fill="#aaa" /></svg>
            <ScrollThumb />
          </ScrollTrack>
        </ScrollZone>
      </BottomBar>
      <StatusBar />

      <ArrowLayer width="1000" height="420" aria-hidden="true">
        <path d="M912 168L733 390" stroke="#fe0000" strokeWidth="4" />
        <path d="M723 402L727 386 738 392z" fill="#fe0000" stroke="#fe0000" />
      </ArrowLayer>

      <Watermark>
        <WatermarkLogo><Logo /></WatermarkLogo>
        <WatermarkUrl>excelsolutionsv.com</WatermarkUrl>
      </Watermark>
    </Shell>
  );
}
